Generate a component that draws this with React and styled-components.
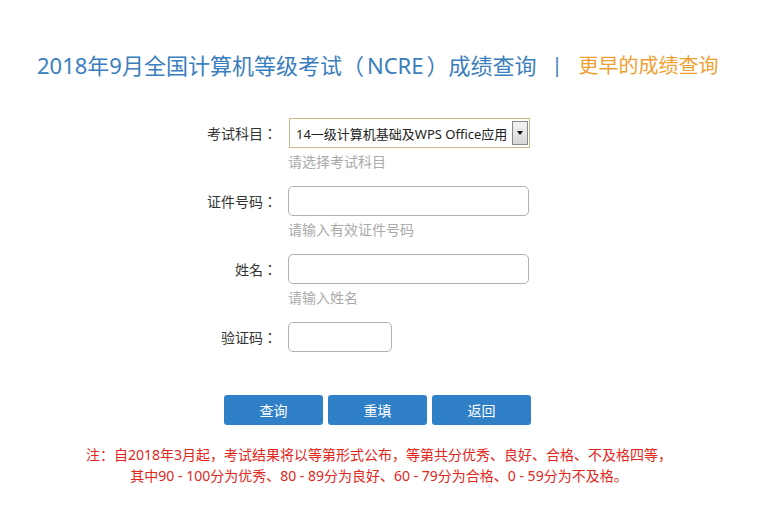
import React from 'react';
import styled, { createGlobalStyle } from 'styled-components';

const GlobalStyle = createGlobalStyle`
    body {
        margin: 0;
        background: #fff;
        font-family: "Noto Sans", "Noto Sans CJK SC", sans-serif;
    }
`;

const Page = styled.div`
    padding-top: 48px;
`;

const Header = styled.div`
    display: flex;
    align-items: center;
    height: 32px;
    padding-left: 37px;
    white-space: nowrap;
`;

const Title = styled.span`
    font-size: 22px;
    color: #3a7ebd;
`;

const Abbr = styled.span`
    margin: 0 3px;
`;

const Divider = styled.span`
    font-size: 20px;
    color: #3a7ebd;
    margin: 0 16px 0 15px;
`;

const EarlierLink = styled.a`
    font-size: 20px;
    color: #f0a030;
    text-decoration: none;
    cursor: pointer;
`;

const Form = styled.form`
    margin-top: 38px;
    display: flex;
    flex-direction: column;
    gap: 14px;
`;

const Row = styled.div`
    display: flex;
    align-items: flex-start;
`;

const Label = styled.label`
    width: 277px;
    margin-right: 11px;
    text-align: right;
    font-family: "Noto Sans CJK TC", "Noto Sans CJK SC", sans-serif;
    font-size: 14px;
    line-height: 30px;
    color: #333;
`;

const Field = styled.div`
    display: flex;
    flex-direction: column;
`;

const Hint = styled.div`
    margin-top: 4px;
    font-size: 14px;
    line-height: 20px;
    color: #aaa;
`;

const Input = styled.input`
    box-sizing: border-box;
    width: ${(p) => p.$width || 241}px;
    height: 30px;
    border: 1px solid #b0b0b0;
    border-radius: 5px;
    padding: 0 6px;
    font-size: 14px;
    outline: none;
`;

const Select = styled.div`
    box-sizing: border-box;
    position: relative;
    width: 241px;
    height: 30px;
    margin-left: 1px;
    border: 1px solid #cbb98a;
    display: flex;
    align-items: center;
    padding-left: 6px;
    font-size: 13px;
    color: #222;
    white-space: nowrap;
    cursor: default;
`;

const ArrowBox = styled.span`
    position: absolute;
    right: 1px;
    top: 2px;
    width: 16px;
    height: 24px;
    box-sizing: border-box;
    border: 1px solid #8a8a8a;
    background: linear-gradient(#f4f4f4, #d6d6d6);
    display: flex;
    align-items: center;
    justify-content: center;
`;

const Triangle = styled.span`
    width: 0;
    height: 0;
    border-left: 3px solid transparent;
    border-right: 3px solid transparent;
    border-top: 4px solid #111;
`;

const Buttons = styled.div`
    display: flex;
    gap: 5px;
    margin-top: 43px;
    padding-left: 224px;
`;

const Button = styled.button`
    width: 99px;
    height: 30px;
    border: none;
    border-radius: 3px;
    background: #2f80c6;
    color: #fff;
    font-family: inherit;
    font-size: 14px;
    cursor: pointer;
`;

const Note = styled.div`
    margin-top: 19px;
    text-align: center;
    font-size: 14px;
    line-height: 21px;
    color: #e3261c;
`;

export default function App() {
    return (
        <Page>
            <GlobalStyle />
            <Header>
                <Title>
                    2018年9月全国计算机等级考试（<Abbr>NCRE</Abbr>）成绩查询
                </Title>
                <Divider>|</Divider>
                <EarlierLink>更早的成绩查询</EarlierLink>
            </Header>
            <Form onSubmit={(e) => e.preventDefault()}>
                <Row>
                    <Label>考试科目：</Label>
                    <Field>
                        <Select>
                            14一级计算机基础及WPS Office应用
                            <ArrowBox>
                                <Triangle />
                            </ArrowBox>
                        </Select>
                        <Hint>请选择考试科目</Hint>
                    </Field>
                </Row>
                <Row>
                    <Label>证件号码：</Label>
                    <Field>
                        <Input />
                        <Hint>请输入有效证件号码</Hint>
                    </Field>
                </Row>
                <Row>
                    <Label>姓名：</Label>
                    <Field>
                        <Input />
                        <Hint>请输入姓名</Hint>
                    </Field>
                </Row>
                <Row>
                    <Label>验证码：</Label>
                    <Field>
                        <Input $width={104} />
                    </Field>
                </Row>
            </Form>
            <Buttons>
                <Button type="button">查询</Button>
                <Button type="button">重填</Button>
                <Button type="button">返回</Button>
            </Buttons>
            <Note>
                注：自2018年3月起，考试结果将以等第形式公布，等第共分优秀、良好、合格、不及格四等，
                <br />
                其中90 - 100分为优秀、80 - 89分为良好、60 - 79分为合格、0 - 59分为不及格。
            </Note>
        </Page>
    );
}
